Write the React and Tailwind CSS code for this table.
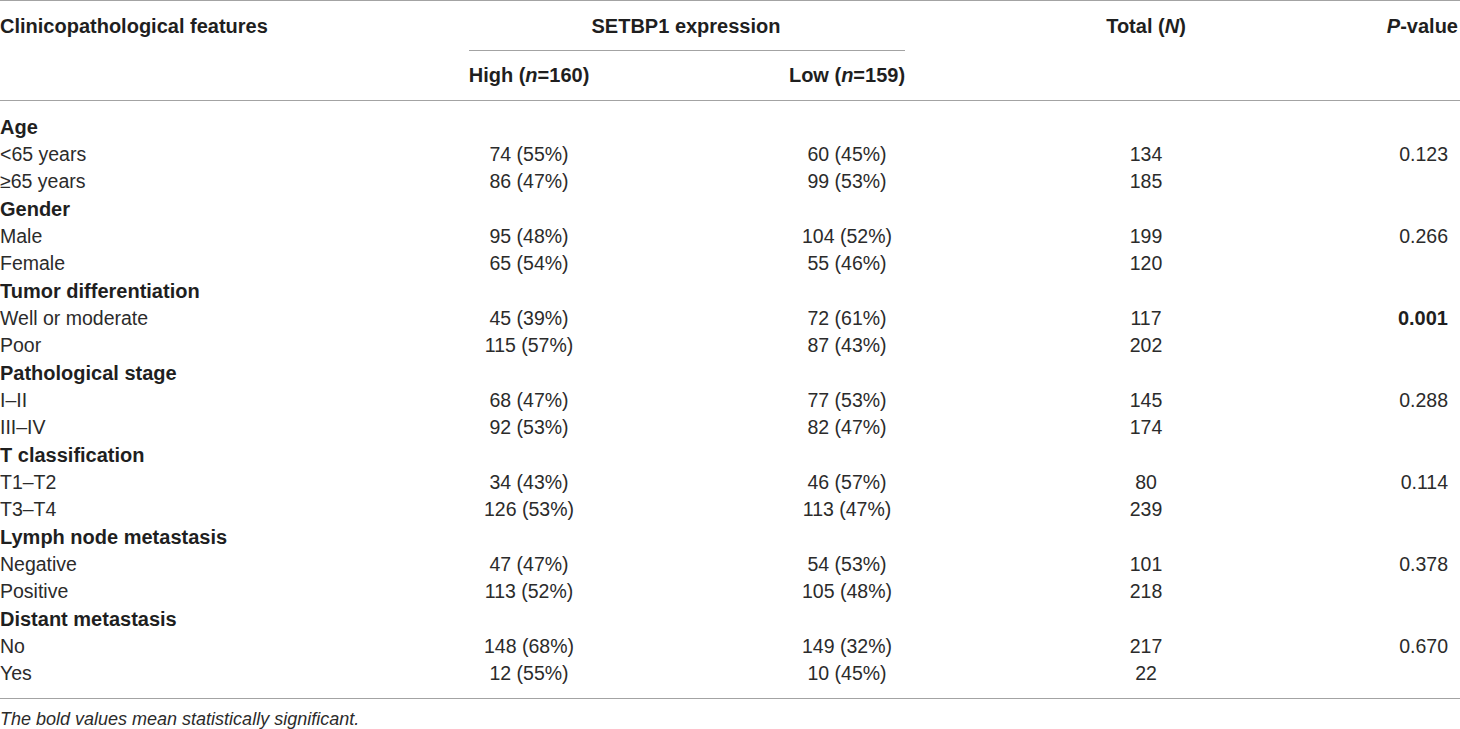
import React from 'react';

const groups = [
  {
    title: 'Age',
    rows: [
      ['<65 years', '74 (55%)', '60 (45%)', '134', '0.123'],
      ['≥65 years', '86 (47%)', '99 (53%)', '185', ''],
    ],
  },
  {
    title: 'Gender',
    rows: [
      ['Male', '95 (48%)', '104 (52%)', '199', '0.266'],
      ['Female', '65 (54%)', '55 (46%)', '120', ''],
    ],
  },
  {
    title: 'Tumor differentiation',
    rows: [
      ['Well or moderate', '45 (39%)', '72 (61%)', '117', '0.001', true],
      ['Poor', '115 (57%)', '87 (43%)', '202', ''],
    ],
  },
  {
    title: 'Pathological stage',
    rows: [
      ['I–II', '68 (47%)', '77 (53%)', '145', '0.288'],
      ['III–IV', '92 (53%)', '82 (47%)', '174', ''],
    ],
  },
  {
    title: 'T classification',
    rows: [
      ['T1–T2', '34 (43%)', '46 (57%)', '80', '0.114'],
      ['T3–T4', '126 (53%)', '113 (47%)', '239', ''],
    ],
  },
  {
    title: 'Lymph node metastasis',
    rows: [
      ['Negative', '47 (47%)', '54 (53%)', '101', '0.378'],
      ['Positive', '113 (52%)', '105 (48%)', '218', ''],
    ],
  },
  {
    title: 'Distant metastasis',
    rows: [
      ['No', '148 (68%)', '149 (32%)', '217', '0.670'],
      ['Yes', '12 (55%)', '10 (45%)', '22', ''],
    ],
  },
];

const cols = 'grid grid-cols-[440px_178px_140px_178px_120px_180px_1fr]';

const DataRow = ({ row }) => {
  const [label, high, low, total, p, bold] = row;
  return (
    <div className={`${cols} h-[27.33px]`}>
      <div>{label}</div>
      <div className="text-center">{high}</div>
      <div />
      <div className="text-center">{low}</div>
      <div />
      <div className="text-center">{total}</div>
      <div className={`text-right pr-[12px] ${bold ? 'font-bold text-[20px] text-[#1f1f1f]' : ''}`}>{p}</div>
    </div>
  );
};

export default function App() {
  return (
    <div className="w-[1460px] h-[729px] overflow-hidden bg-white font-['Liberation_Sans',Arial,sans-serif] text-[19.5px] leading-[27.33px] text-[#2b2b2b]">
      <div className="border-t border-b border-[#a3a3a3]">
        <div className={`${cols} font-bold text-[20px] text-[#1f1f1f]`}>
          <div className="pt-[12px] pb-[10px]">Clinicopathological features</div>
          <div className="col-span-3 pt-[12px]">
            <div className="ml-[29px] mr-[31px] pb-[10px] border-b border-[#a3a3a3] text-center">
              <span className="-ml-[2px]">SETBP1 expression</span>
            </div>
          </div>
          <div />
          <div className="pt-[12px] text-center">
            Total (<i>N</i>)
          </div>
          <div className="pt-[12px] text-right pr-[2px]">
            <i>P</i>-value
          </div>

          <div />
          <div className="pt-[11px] pb-[10px] text-center">
            High (<i>n</i>=160)
          </div>
          <div />
          <div className="pt-[11px] pb-[10px] text-center">
            Low (<i>n</i>=159)
          </div>
          <div />
          <div />
          <div />
        </div>
      </div>

      <div className="pt-[13px] pb-[10px] border-b border-[#a3a3a3]">
        {groups.map((g) => (
          <div key={g.title}>
            <div className="h-[27.33px] font-bold text-[20px] text-[#1f1f1f]">{g.title}</div>
            {g.rows.map((r) => (
              <DataRow key={r[0]} row={r} />
            ))}
          </div>
        ))}
      </div>

      <div className="pt-[7px] text-[18px] italic text-[#2b2b2b]">
        The bold values mean statistically significant.
      </div>
    </div>
  );
}
